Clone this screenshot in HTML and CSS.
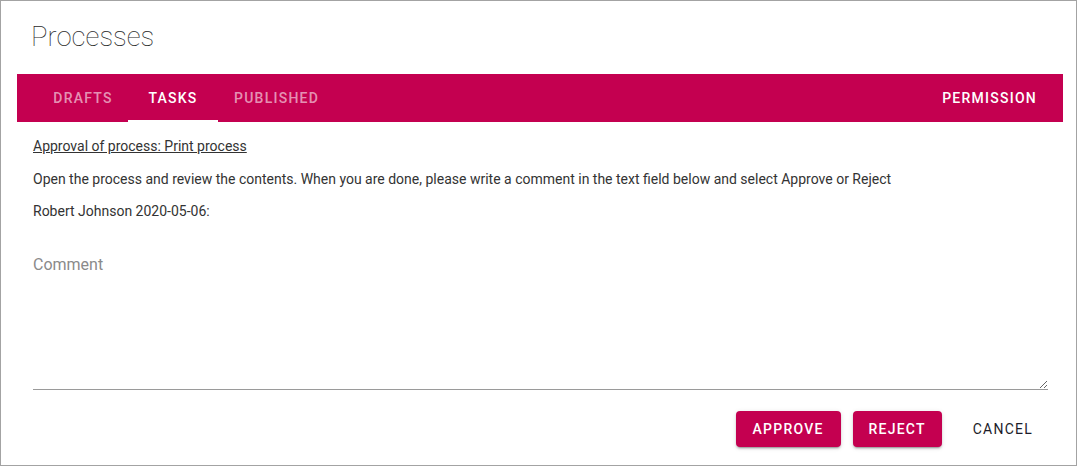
FILE: index.html
```html
<!DOCTYPE html>
<html>
<head>
<meta charset="utf-8">
<link rel="stylesheet" href="styles.css">
</head>
<body>
<div class="frame">
  <header class="header">
    <h1 class="title">Processes</h1>
  </header>
  <nav class="tabbar">
    <div class="tabs">
      <span class="tab tab-drafts">DRAFTS</span>
      <span class="tab tab-active">TASKS</span>
      <span class="tab tab-published">PUBLISHED</span>
    </div>
    <span class="tab tab-permission">PERMISSION</span>
  </nav>
  <main class="content">
    <p class="line"><a class="link" href="#">Approval of process: Print process</a></p>
    <p class="line">Open the process and review the contents. When you are done, please write a comment in the text field below and select Approve or Reject</p>
    <p class="line">Robert Johnson 2020-05-06:</p>
    <textarea class="comment" placeholder="Comment"></textarea>
    <div class="actions">
      <button class="btn btn-primary btn-approve">APPROVE</button>
      <button class="btn btn-primary btn-reject">REJECT</button>
      <button class="btn btn-text">CANCEL</button>
    </div>
  </main>
</div>
</body>
</html>
```

FILE: styles.css
```css
html, body {
  margin: 0;
  padding: 0;
  background: #fff;
}
body {
  font-family: Roboto, "Liberation Sans", sans-serif;
  color: #333;
}
.frame {
  box-sizing: border-box;
  width: 1077px;
  height: 466px;
  border: 1px solid #a3a3a3;
  display: flex;
  flex-direction: column;
}
.header {
  height: 73px;
  box-sizing: border-box;
  padding-left: 30px;
  padding-top: 17px;
}
.title {
  margin: 0;
  font-weight: 100;
  font-size: 27.5px;
  line-height: 38px;
  color: #2a2a2a;
}
.tabbar {
  margin: 0 13px 0 16px;
  height: 48px;
  background: #c40050;
  display: flex;
  justify-content: space-between;
  align-items: stretch;
}
.tabs {
  display: flex;
  padding-left: 21px;
}
.tab {
  display: flex;
  align-items: center;
  justify-content: center;
  box-sizing: border-box;
  font-size: 14px;
  font-weight: 500;
  letter-spacing: 1.25px;
  color: rgba(255, 255, 255, 0.58);
  height: 48px;
}
.tab-drafts {
  width: 90px;
}
.tab-active {
  width: 90px;
  color: #fff;
  border-bottom: 2px solid #fff;
  padding-top: 2px;
}
.tab-published {
  padding: 0 16px;
}
.tab-permission {
  color: #fff;
  padding-right: 26px;
}
.content {
  padding: 14px 27px 0 32px;
  display: flex;
  flex-direction: column;
}
.line {
  margin: 0 0 12.5px 0;
  font-size: 14px;
  line-height: 20px;
  color: #333;
}
.link {
  color: #333;
  text-decoration: underline;
}
.comment {
  display: block;
  margin-top: 19px;
  width: 1015px;
  height: 137px;
  box-sizing: border-box;
  padding: 0;
  border: none;
  border-bottom: 1px solid #9a9a9a;
  font-family: Roboto, "Liberation Sans", sans-serif;
  font-size: 16px;
  line-height: 24px;
  outline: none;
  resize: vertical;
}
.comment::placeholder {
  color: #8a8a8a;
}
.actions {
  display: flex;
  justify-content: flex-end;
  margin-top: 21px;
  width: 1015px;
}
.btn {
  height: 36px;
  border: none;
  border-radius: 4px;
  font-family: Roboto, "Liberation Sans", sans-serif;
  font-size: 14px;
  font-weight: 500;
  letter-spacing: 1.25px;
  cursor: pointer;
}
.btn-primary {
  background: #c40050;
  color: #fff;
  box-shadow: 0 3px 1px -2px rgba(0,0,0,0.2), 0 2px 2px 0 rgba(0,0,0,0.14), 0 1px 5px 0 rgba(0,0,0,0.12);
}
.btn-approve {
  width: 105px;
  padding: 0;
}
.btn-reject {
  width: 89px;
  padding: 0;
  margin-left: 12px;
}
.btn-text {
  background: transparent;
  color: #1c1c2a;
  font-weight: 400;
  padding: 0 15px 0 16px;
  margin-left: 15px;
}
```
